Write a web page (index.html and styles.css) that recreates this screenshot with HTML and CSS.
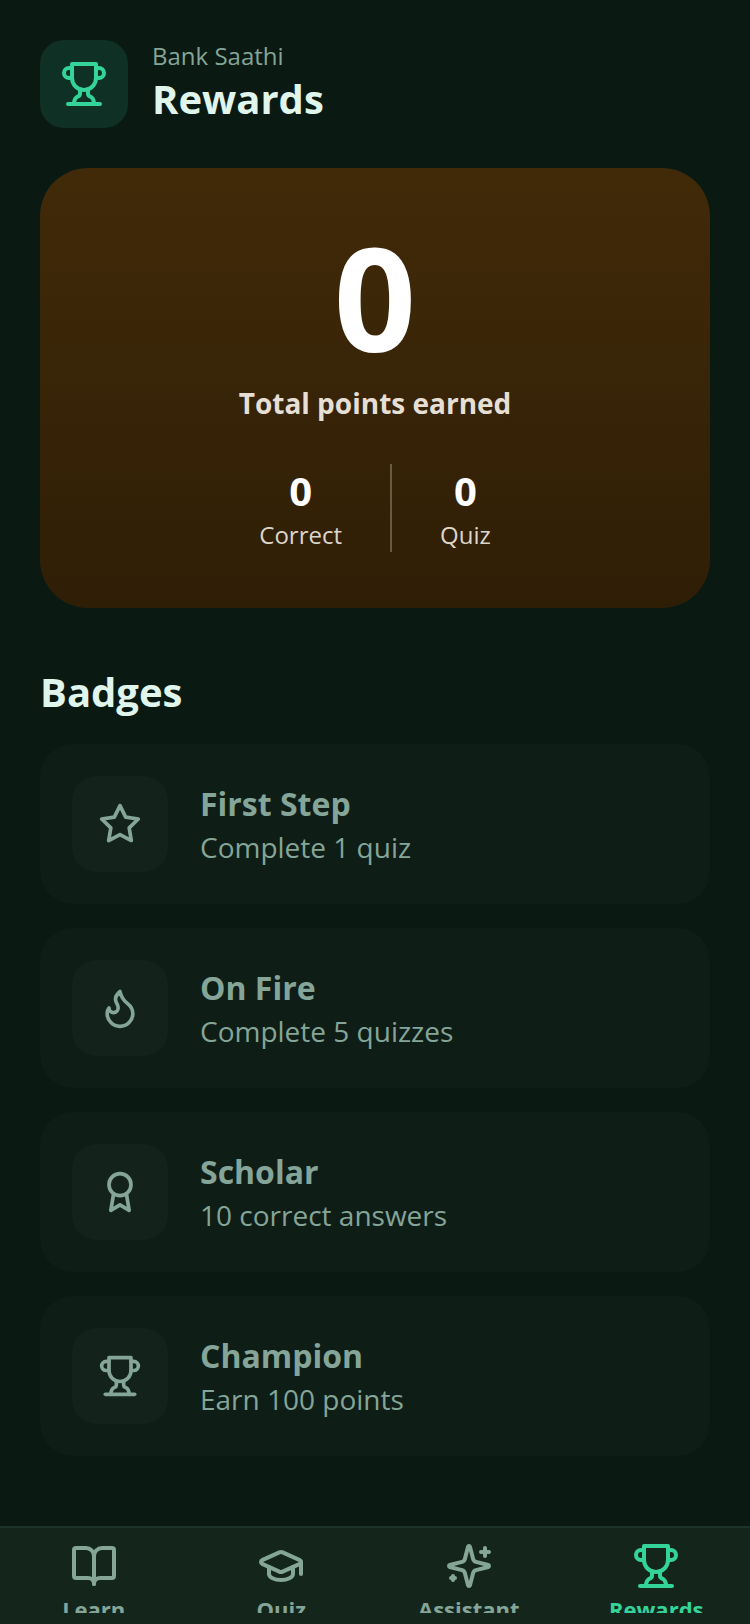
FILE: index.html
```html
<!DOCTYPE html>
<html lang="en">
<head>
    <meta charset="UTF-8">
    <meta name="viewport" content="width=device-width, initial-scale=1.0">
    <title>Rewards</title>
    <link rel="stylesheet" href="styles.css">
</head>
<body>
    <div class="app">
        <main class="content">
            <header class="top">
                <div class="top-icon">
                    <svg class="ico ico-48" viewBox="0 0 24 24"><use href="#i-trophy"/></svg>
                </div>
                <div class="top-text">
                    <p class="app-name">Bank Saathi</p>
                    <h1>Rewards</h1>
                </div>
            </header>

            <section class="hero">
                <div class="total">0</div>
                <p class="total-label">Total points earned</p>
                <div class="stats">
                    <div class="stat">
                        <strong>0</strong>
                        <span>Correct</span>
                    </div>
                    <div class="stat-line"></div>
                    <div class="stat">
                        <strong>0</strong>
                        <span>Quiz</span>
                    </div>
                </div>
            </section>

            <h2>Badges</h2>
            <div class="badges">
                <div class="badge">
                    <div class="badge-icon"><svg class="ico ico-44" viewBox="0 0 24 24"><polygon points="12 2 15.09 8.26 22 9.27 17 14.14 18.18 21.02 12 17.77 5.82 21.02 7 14.14 2 9.27 8.91 8.26 12 2"/></svg></div>
                    <div>
                        <h3>First Step</h3>
                        <p>Complete 1 quiz</p>
                    </div>
                </div>
                <div class="badge">
                    <div class="badge-icon"><svg class="ico ico-44" viewBox="0 0 24 24"><path d="M8.5 14.5A2.5 2.5 0 0 0 11 12c0-1.38-.5-2-1-3-1.072-2.143-.224-4.054 2-6 .5 2.5 2 4.9 4 6.5 2 1.6 3 3.5 3 5.5a7 7 0 1 1-14 0c0-1.153.433-2.294 1-3a2.5 2.5 0 0 0 2.5 2.5z"/></svg></div>
                    <div>
                        <h3>On Fire</h3>
                        <p>Complete 5 quizzes</p>
                    </div>
                </div>
                <div class="badge">
                    <div class="badge-icon"><svg class="ico ico-44" viewBox="0 0 24 24"><path d="M15.477 12.89 17 22l-5-3-5 3 1.523-9.11"/><circle cx="12" cy="8" r="6"/></svg></div>
                    <div>
                        <h3>Scholar</h3>
                        <p>10 correct answers</p>
                    </div>
                </div>
                <div class="badge">
                    <div class="badge-icon"><svg class="ico ico-44" viewBox="0 0 24 24"><use href="#i-trophy"/></svg></div>
                    <div>
                        <h3>Champion</h3>
                        <p>Earn 100 points</p>
                    </div>
                </div>
            </div>
        </main>

        <nav class="tabs">
            <div class="tab">
                <svg class="ico ico-48" viewBox="0 0 24 24"><path d="M12 7v14"/><path d="M3 18a1 1 0 0 1-1-1V4a1 1 0 0 1 1-1h5a4 4 0 0 1 4 4 4 4 0 0 1 4-4h5a1 1 0 0 1 1 1v13a1 1 0 0 1-1 1h-6a3 3 0 0 0-3 3 3 3 0 0 0-3-3z"/></svg>
                <span>Learn</span>
            </div>
            <div class="tab">
                <svg class="ico ico-48" viewBox="0 0 24 24"><path d="M21.42 10.922a1 1 0 0 0-.019-1.838L12.83 5.18a2 2 0 0 0-1.66 0L2.6 9.08a1 1 0 0 0 0 1.832l8.57 3.908a2 2 0 0 0 1.66 0z"/><path d="M22 10v6"/><path d="M6 12.5V16a6 3 0 0 0 12 0v-3.5"/></svg>
                <span>Quiz</span>
            </div>
            <div class="tab">
                <svg class="ico ico-48" viewBox="0 0 24 24"><path d="M9.937 15.5A2 2 0 0 0 8.5 14.063l-6.135-1.582a.5.5 0 0 1 0-.962L8.5 9.936A2 2 0 0 0 9.937 8.5l1.582-6.135a.5.5 0 0 1 .963 0L14.063 8.5A2 2 0 0 0 15.5 9.937l6.135 1.581a.5.5 0 0 1 0 .964L15.5 14.063a2 2 0 0 0-1.437 1.437l-1.582 6.135a.5.5 0 0 1-.963 0z"/><path d="M20 3v4"/><path d="M22 5h-4"/><path d="M4 17v2"/><path d="M5 18H3"/></svg>
                <span>Assistant</span>
            </div>
            <div class="tab active">
                <svg class="ico ico-48" viewBox="0 0 24 24"><use href="#i-trophy"/></svg>
                <span>Rewards</span>
            </div>
        </nav>
    </div>

    <svg class="defs" width="0" height="0">
        <symbol id="i-trophy" viewBox="0 0 24 24">
            <path d="M6 9H4.5a2.5 2.5 0 0 1 0-5H6"/>
            <path d="M18 9h1.5a2.5 2.5 0 0 0 0-5H18"/>
            <path d="M4 22h16"/>
            <path d="M10 14.66V17c0 .55-.47.98-.97 1.21C7.85 18.75 7 20.24 7 22"/>
            <path d="M14 14.66V17c0 .55.47.98.97 1.21C16.15 18.75 17 20.24 17 22"/>
            <path d="M18 2H6v7a6 6 0 0 0 12 0V2Z"/>
        </symbol>
    </svg>
</body>
</html>
```

FILE: styles.css
```css
* { box-sizing: border-box; }
body { margin: 0; background-color: #0a1912; font-family: "Open Sans", "Noto Sans", sans-serif; }
h1, h2, h3, p { margin: 0; }
.app { width: 750px; height: 1624px; display: flex; flex-direction: column; overflow: hidden; }
.content { flex: 1; padding: 40px 40px 0; }
.defs { display: block; }

.ico { display: block; flex: none; fill: none; stroke: currentColor; stroke-width: 2; stroke-linecap: round; stroke-linejoin: round; }
.ico-48 { width: 48px; height: 48px; }
.ico-44 { width: 44px; height: 44px; }

.top { display: flex; align-items: center; gap: 24px; }
.top-icon { width: 88px; height: 88px; display: flex; align-items: center; justify-content: center; background: #0f3025; border-radius: 24px; color: #34d399; }
.top-text { padding-bottom: 2px; }
.app-name { font-size: 24px; line-height: 32px; color: #84a597; }
h1 { font-size: 40px; line-height: 54px; font-weight: 700; color: #e0f5ec; }

.hero { margin-top: 40px; padding: 48px 0 56px; background: linear-gradient(180deg, #412a08, #2f1e06); border-radius: 48px; text-align: center; color: #fff; }
.total { font-size: 144px; line-height: 160px; font-weight: 700; }
.total-label { margin-top: 8px; font-size: 28px; line-height: 38px; font-weight: 700; color: #e5dfd5; }
.stats { display: flex; justify-content: center; align-items: stretch; gap: 48px; margin-top: 42px; }
.stat { display: flex; flex-direction: column; align-items: center; }
.stat strong { font-size: 40px; line-height: 54px; font-weight: 700; }
.stat span { font-size: 24px; line-height: 34px; color: #dcd5ca; }
.stat-line { width: 2px; background: #6b5a43; }

h2 { margin-top: 56px; font-size: 40px; line-height: 56px; font-weight: 700; color: #e0f5ec; }
.badges { display: flex; flex-direction: column; gap: 24px; margin-top: 24px; }
.badge { height: 160px; display: flex; align-items: center; gap: 32px; padding: 0 32px; background: #0f1d17; border-radius: 32px; }
.badge-icon { width: 96px; height: 96px; display: flex; align-items: center; justify-content: center; background: #13231c; border-radius: 24px; color: #84a597; }
.badge h3 { font-size: 32px; line-height: 46px; font-weight: 700; color: #84a597; }
.badge p { font-size: 28px; line-height: 40px; color: #84a597; }

.tabs { height: 98px; display: grid; grid-template-columns: repeat(4, 1fr); padding: 14px 0 11px; background: #14261c; border-top: 2px solid #1d3529; }
.tab { display: flex; flex-direction: column; align-items: center; gap: 4px; overflow: hidden; color: #84a597; }
.tab span { font-size: 22px; line-height: 30px; font-weight: 700; }
.tab.active { color: #34d399; }
```
